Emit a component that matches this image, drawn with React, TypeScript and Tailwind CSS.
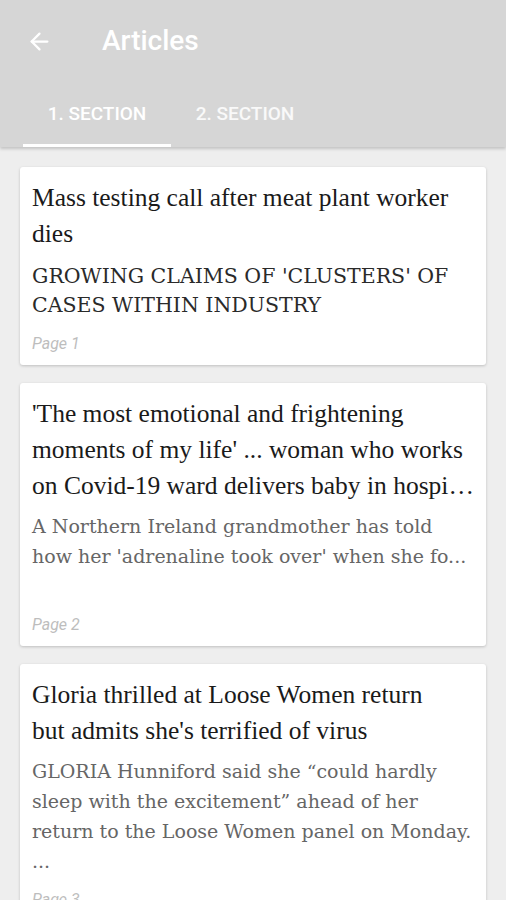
import React from 'react';
import { ArrowLeft } from 'lucide-react';

type Article = {
  title: string;
  body: string;
  page: number;
  caps?: boolean;
  minBody?: boolean;
};

const articles: Article[] = [
  {
    title: 'Mass testing call after meat plant worker dies',
    body: "GROWING CLAIMS OF 'CLUSTERS' OF CASES WITHIN INDUSTRY",
    page: 1,
    caps: true,
  },
  {
    title:
      "'The most emotional and frightening moments of my life' ... woman who works\non Covid-19 ward delivers baby in hospi…",
    body: "A Northern Ireland grandmother has told how her 'adrenaline took over' when she fo...",
    page: 2,
    minBody: true,
  },
  {
    title: "Gloria thrilled at Loose Women return\nbut admits she's terrified of virus",
    body: 'GLORIA Hunniford said she “could hardly sleep with the excitement” ahead of her return to the Loose Women panel on Monday. ...',
    page: 3,
  },
];

const ArticleCard = ({ a }: { a: Article }) => (
  <div className="bg-white rounded-[3px] shadow-[0_1px_3px_rgba(0,0,0,0.2)] pl-3 pr-[10px] pt-[13px] pb-[11px]">
    <h3 className="font-['Liberation_Serif',serif] text-[25.5px] leading-[36px] text-[#1a1a1a] whitespace-pre-line">
      {a.title}
    </h3>
    <p
      className={`font-['DejaVu_Serif',serif] ${
        a.caps ? 'mt-[10px] text-[20.5px] leading-[29px] text-[#2a2a2a]' : 'mt-[7px] text-[19px] leading-[30px] text-[#666]'
      } ${a.minBody ? 'min-h-[90px]' : ''}`}
    >
      {a.body}
    </p>
    <div className="mt-[14px] font-['Roboto',sans-serif] italic text-[16px] leading-5 text-[#bdbdbd]">Page {a.page}</div>
  </div>
);

export default function App() {
  return (
    <div className="w-[506px] h-[900px] overflow-hidden bg-[#eeeeee] font-['Roboto',sans-serif]">
      <div className="bg-[#d6d6d6] shadow-[0_2px_3px_rgba(0,0,0,0.18)] relative z-10">
        <div className="h-[82px] flex items-center">
          <ArrowLeft className="ml-[26px] text-white" size={27} strokeWidth={2} />
          <span className="ml-[49px] text-white text-[28px] font-medium">Articles</span>
        </div>
        <div className="flex h-[65px] pl-[23px]">
          <div className="w-[148px] flex flex-col">
            <div className="flex-1 flex items-center justify-center text-white text-[19px] font-medium pt-[3px]">
              1. SECTION
            </div>
            <div className="h-[3px] bg-white" />
          </div>
          <div className="w-[148px] flex items-center justify-center text-white/85 text-[19px] font-medium">
            2. SECTION
          </div>
        </div>
      </div>
      <div className="flex flex-col gap-[18px] px-5 pt-5">
        {articles.map((a) => (
          <ArticleCard key={a.page} a={a} />
        ))}
      </div>
    </div>
  );
}
